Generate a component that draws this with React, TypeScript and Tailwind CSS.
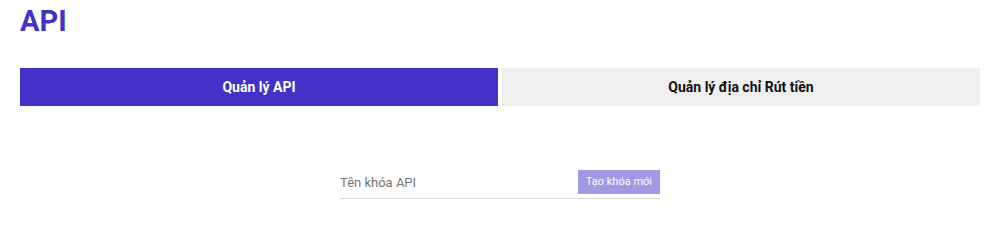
import { useState } from "react";

const TABS = [
  { value: "api", label: "Quản lý API" },
  { value: "address", label: "Quản lý địa chỉ Rút tiền" },
] as const;

type TabId = (typeof TABS)[number]["value"];

export default function App() {
  const [tab, setTab] = useState<TabId>("api");
  const [name, setName] = useState("");

  return (
    <div className="min-h-[207px] bg-white pl-5 pt-[3px] font-['Roboto',sans-serif]">
      <div className="w-[960px]">
        <h1 className="text-[29px] font-bold leading-[36px] text-[#4431c7]">API</h1>

        <div className="mt-[29px] flex gap-1">
          {TABS.map((t) => (
            <button
              key={t.value}
              onClick={() => setTab(t.value)}
              className={
                tab === t.value
                  ? "h-[38px] flex-1 bg-[#4431c7] text-sm font-bold text-white"
                  : "h-[38px] flex-1 bg-[#efefef] text-sm font-bold text-[#111]"
              }
            >
              {t.label}
            </button>
          ))}
        </div>

        {tab === "api" && (
          <div className="mt-16 flex justify-center">
            <div className="flex w-80 items-center border-b border-[#d6d6d6] pb-1">
              <input
                value={name}
                onChange={(e) => setName(e.target.value)}
                placeholder="Tên khóa API"
                className="h-6 flex-1 bg-transparent text-[13px] text-[#333] outline-none placeholder:text-[#757575]"
              />
              <button
                disabled={!name.trim()}
                className="h-6 bg-[#a398e2] px-2 text-[11px] text-white"
              >
                Tạo khóa mới
              </button>
            </div>
          </div>
        )}
      </div>
    </div>
  );
}
